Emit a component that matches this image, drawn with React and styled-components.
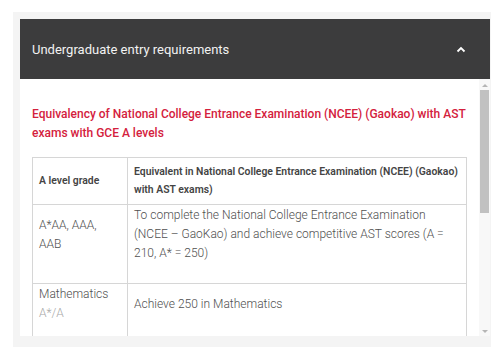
import styled, { createGlobalStyle } from "styled-components";

const Global = createGlobalStyle`
  body {
    margin: 0;
    background: #fff;
    font-family: Roboto, "Liberation Sans", sans-serif;
  }
`;

const Panel = styled.div`
  width: 478px;
  margin: 12px 0 0 13px;
  padding: 7px 1px 11px 7px;
  box-sizing: border-box;
  background: #f4f4f4;
`;

const Cabecera = styled.div`
  height: 60px;
  display: flex;
  align-items: center;
  justify-content: space-between;
  padding: 0 24px 0 12px;
  background: #3c3c3d;
  color: #f2f2f2;
  font-size: 13px;
`;

const Contenido = styled.div`
  height: 257px;
  display: flex;
  background: #fff;
`;

const Desplazable = styled.div`
  flex: 1;
  overflow: hidden;
  padding: 26px 13px 0 12px;
`;

const Barra = styled.div`
  width: 11px;
  display: flex;
  flex-direction: column;
  align-items: center;
  padding: 5px 0 3px;
  box-sizing: border-box;
  background: #f8f8f8;
`;

const Flecha = styled.div`
  width: 0;
  height: 0;
  margin: 0 0 ${(p) => (p.$abajo ? "0" : "3px")};
  margin-top: ${(p) => (p.$abajo ? "auto" : "0")};
  border-left: 3px solid transparent;
  border-right: 3px solid transparent;
  ${(p) => (p.$abajo ? "border-top" : "border-bottom")}: 3px solid #b5b5b5;
`;

const Pulgar = styled.div`
  width: 9px;
  height: 123px;
  background: #c1c1c1;
`;

const Titulo = styled.p`
  margin: 0 0 15px;
  color: #d4213d;
  font-size: 12px;
  font-weight: 500;
  line-height: 18.5px;
`;

const Tabla = styled.table`
  width: 435px;
  border-collapse: collapse;

  th, td {
    border: 1px solid #d6d6d6;
    text-align: left;
    vertical-align: middle;
  }
  th {
    padding: 5px 6px;
    font-size: 10.4px;
    font-weight: 600;
    line-height: 18px;
    color: #444;
  }
  td {
    padding: 1px 6px 20px;
    font-size: 12px;
    font-weight: 300;
    line-height: 19px;
    color: #4f4f4f;
  }
  .grado {
    width: 82px;
  }
`;

const Nota = styled.span`
  display: block;
  color: #a8a8a8;
`;

const Chevron = () => (
  <svg width="10" height="7" viewBox="0 0 10 7">
    <path d="M1.5 5.5 L5 2 L8.5 5.5" fill="none" stroke="#fff" strokeWidth="1.8" />
  </svg>
);

const App = () => {
  return (
    <>
      <Global />
      <Panel>
        <Cabecera>
          Undergraduate entry requirements
          <Chevron />
        </Cabecera>
        <Contenido>
          <Desplazable>
            <Titulo>
              Equivalency of National College Entrance Examination (NCEE) (Gaokao) with AST exams with GCE A levels
            </Titulo>
            <Tabla>
              <thead>
                <tr>
                  <th className="grado">A level grade</th>
                  <th>Equivalent in National College Entrance Examination (NCEE) (Gaokao) with AST exams)</th>
                </tr>
              </thead>
              <tbody>
                <tr>
                  <td>A*AA, AAA, AAB</td>
                  <td>To complete the National College Entrance Examination (NCEE – GaoKao) and achieve competitive AST scores (A = 210, A* = 250)</td>
                </tr>
                <tr>
                  <td>
                    Mathematics
                    <Nota>A*/A</Nota>
                  </td>
                  <td>Achieve 250 in Mathematics</td>
                </tr>
              </tbody>
            </Tabla>
          </Desplazable>
          <Barra>
            <Flecha />
            <Pulgar />
            <Flecha $abajo />
          </Barra>
        </Contenido>
      </Panel>
    </>
  );
};

export default App;
